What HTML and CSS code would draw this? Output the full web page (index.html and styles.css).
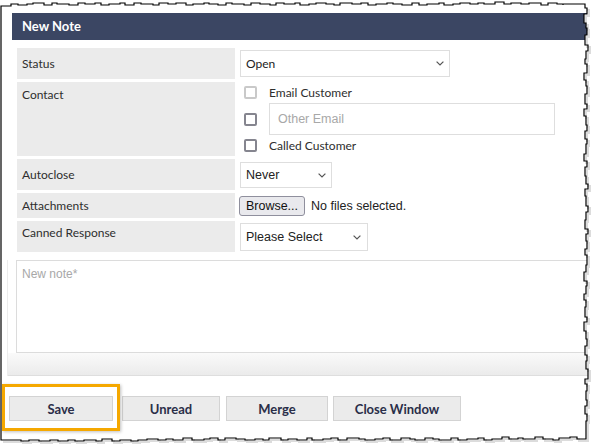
FILE: index.html
```html
<!DOCTYPE html>
<html>
<head>
<meta charset="utf-8">
<link rel="stylesheet" href="styles.css">
</head>
<body>
<div class="page">
  <div class="header">New Note</div>

  <div class="form">
    <div class="row r-status">
      <div class="label">Status</div>
      <div class="value">
        <div class="select sel-status"><span>Open</span>
          <svg class="chev" width="8" height="5" viewBox="0 0 8 5"><path d="M0.6 0.6 L4 4 L7.4 0.6" fill="none" stroke="#555" stroke-width="1.2"/></svg>
        </div>
      </div>
    </div>

    <div class="row r-contact">
      <div class="label top">Contact</div>
      <div class="value contact">
        <div class="cline l1"><span class="cb light"></span><span class="ctext">Email Customer</span></div>
        <div class="cline l2"><span class="cb"></span><input class="email" type="text" placeholder="Other Email"></div>
        <div class="cline l3"><span class="cb"></span><span class="ctext">Called Customer</span></div>
      </div>
    </div>

    <div class="row r-auto">
      <div class="label">Autoclose</div>
      <div class="value">
        <div class="select sel-auto"><span>Never</span>
          <svg class="chev" width="8" height="5" viewBox="0 0 8 5"><path d="M0.6 0.6 L4 4 L7.4 0.6" fill="none" stroke="#555" stroke-width="1.2"/></svg>
        </div>
      </div>
    </div>

    <div class="row r-attach">
      <div class="label">Attachments</div>
      <div class="value attach">
        <span class="browse">Browse...</span><span class="nofiles">No files selected.</span>
      </div>
    </div>

    <div class="row r-canned">
      <div class="label top canned">Canned Response</div>
      <div class="value">
        <div class="select sel-canned"><span>Please Select</span>
          <svg class="chev" width="8" height="5" viewBox="0 0 8 5"><path d="M0.6 0.6 L4 4 L7.4 0.6" fill="none" stroke="#555" stroke-width="1.2"/></svg>
        </div>
      </div>
    </div>
  </div>

  <div class="note-panel">
    <div class="note-wrap"><textarea class="note" placeholder="New note*"></textarea></div>
    <div class="panel-foot"></div>
  </div>

  <div class="actions">
    <button class="btn b-save">Save</button>
    <button class="btn b-unread">Unread</button>
    <button class="btn b-merge">Merge</button>
    <button class="btn b-close">Close Window</button>
  </div>

  <div class="highlight"></div>

  <svg class="torn" width="592" height="445" viewBox="0 0 592 445">
    <path class="mask" fill-rule="evenodd" d="M0,0H592V445H0Z M1,439 V6 h10 v-2 h7 v1 h9 v-1 h6 v-1 h11 v2 h8 v-2 h5 v1 h12 v1 h9 v-2 h7 v1 h10 v-1 h6 v2 h8 v-1 h11 v-1 h5 v2 h9 v-2 h7 v1 h12 v1 h6 v-2 h9 v1 h8 v-1 h10 v2 h7 v-1 h11 v-1 h5 v1 h9 v1 h8 v-2 h6 v1 h12 v1 h7 v-2 h9 v1 h10 v1 h6 v-2 h8 v1 h11 v-1 h5 v2 h9 v-1 h7 v-1 h10 v1 h8 v1 h6 v-2 h12 v1 h9 v-1 h7 v2 h8 v-1 h11 v-1 h6 v1 h9 v1 h10 v-2 h7 v2 h8 v-1 h12 v-1 h5 v2 h9 v-1 h7 v-1 h10 v1 h8 v-1 h6 v1 h11 v-2 h9 v2 h7 v-1 h10 v1 h8 v-1 h12 v2 h7 v-2 h9 v1 h6 v1 v-1 H585 V8 h2 v6 h-3 v9 h2 v5 h1 v7 h-2 v10 h3 v6 h-2 v8 h-1 v5 h2 v9 h-3 v7 h2 v6 h1 v8 h-2 v10 h2 v5 h-3 v7 h2 v9 h1 v6 h-2 v8 h2 v5 h-1 v10 h-2 v7 h3 v6 h-2 v9 h1 v8 h2 v5 h-3 v7 h1 v10 h2 v6 h-2 v8 h-1 v9 h3 v5 h-2 v7 h1 v8 h-2 v6 h2 v10 h-1 v7 h-2 v9 h3 v5 h-1 v8 h-2 v6 h2 v7 h-1 v10 h2 v5 h-3 v9 h2 v8 h1 v7 h-2 v9 h2 v6 h-1 v8 h2 v10 h-3 v5 h2 v7 h-1 v9 h1 v6 h-2 v8 h2 v7 h-1 V437 v2 h-9 v-2 h-7 v1 h-11 v2 h-6 v-1 h-10 v-2 h-8 v2 h-12 v-1 h-5 v1 h-9 v-2 h-7 v2 h-10 v1 h-8 v-2 h-6 v1 h-11 v1 h-9 v-2 h-7 v2 h-12 v-1 h-6 v-1 h-8 v2 h-10 v-1 h-5 v-1 h-9 v2 h-11 v-2 h-7 v1 h-8 v1 h-10 v-1 h-6 v-1 h-12 v2 h-9 v-2 h-7 v1 h-8 v1 h-11 v-2 h-5 v2 h-10 v-1 h-9 v1 h-7 v-2 h-12 v2 h-6 v-1 h-8 v1 h-10 v-1 h-9 v-1 h-11 v2 h-7 v-2 h-8 v1 h-6 v1 h-12 v-2 h-9 v2 h-10 v-1 h-7 v1 h-8 v-1 h-11 v1 h-9 v1 h-7 v-1 h-11 v1 h-8 v-2 h-10 v2 h-6 v-1 h-12 v1 h-9 v-1 h-7 v1 h-10 v-1 h-8 v1 h-11 v-1 h-10 v1 h-8 v-1 h-7 H1 Z"/>
    <path class="shadow" transform="translate(2,2)" d="M585,8 h2 v6 h-3 v9 h2 v5 h1 v7 h-2 v10 h3 v6 h-2 v8 h-1 v5 h2 v9 h-3 v7 h2 v6 h1 v8 h-2 v10 h2 v5 h-3 v7 h2 v9 h1 v6 h-2 v8 h2 v5 h-1 v10 h-2 v7 h3 v6 h-2 v9 h1 v8 h2 v5 h-3 v7 h1 v10 h2 v6 h-2 v8 h-1 v9 h3 v5 h-2 v7 h1 v8 h-2 v6 h2 v10 h-1 v7 h-2 v9 h3 v5 h-1 v8 h-2 v6 h2 v7 h-1 v10 h2 v5 h-3 v9 h2 v8 h1 v7 h-2 v9 h2 v6 h-1 v8 h2 v10 h-3 v5 h2 v7 h-1 v9 h1 v6 h-2 v8 h2 v7 h-1 V437 v2 h-9 v-2 h-7 v1 h-11 v2 h-6 v-1 h-10 v-2 h-8 v2 h-12 v-1 h-5 v1 h-9 v-2 h-7 v2 h-10 v1 h-8 v-2 h-6 v1 h-11 v1 h-9 v-2 h-7 v2 h-12 v-1 h-6 v-1 h-8 v2 h-10 v-1 h-5 v-1 h-9 v2 h-11 v-2 h-7 v1 h-8 v1 h-10 v-1 h-6 v-1 h-12 v2 h-9 v-2 h-7 v1 h-8 v1 h-11 v-2 h-5 v2 h-10 v-1 h-9 v1 h-7 v-2 h-12 v2 h-6 v-1 h-8 v1 h-10 v-1 h-9 v-1 h-11 v2 h-7 v-2 h-8 v1 h-6 v1 h-12 v-2 h-9 v2 h-10 v-1 h-7 v1 h-8 v-1 h-11 v1 h-9 v1 h-7 v-1 h-11 v1 h-8 v-2 h-10 v2 h-6 v-1 h-12 v1 h-9 v-1 h-7 v1 h-10 v-1 h-8 v1 h-11 v-1 h-10 v1 h-8 v-1 h-7 H1"/>
    <path class="edge" d="M1,439 V6 h10 v-2 h7 v1 h9 v-1 h6 v-1 h11 v2 h8 v-2 h5 v1 h12 v1 h9 v-2 h7 v1 h10 v-1 h6 v2 h8 v-1 h11 v-1 h5 v2 h9 v-2 h7 v1 h12 v1 h6 v-2 h9 v1 h8 v-1 h10 v2 h7 v-1 h11 v-1 h5 v1 h9 v1 h8 v-2 h6 v1 h12 v1 h7 v-2 h9 v1 h10 v1 h6 v-2 h8 v1 h11 v-1 h5 v2 h9 v-1 h7 v-1 h10 v1 h8 v1 h6 v-2 h12 v1 h9 v-1 h7 v2 h8 v-1 h11 v-1 h6 v1 h9 v1 h10 v-2 h7 v2 h8 v-1 h12 v-1 h5 v2 h9 v-1 h7 v-1 h10 v1 h8 v-1 h6 v1 h11 v-2 h9 v2 h7 v-1 h10 v1 h8 v-1 h12 v2 h7 v-2 h9 v1 h6 v1 v-1 H585 V8 h2 v6 h-3 v9 h2 v5 h1 v7 h-2 v10 h3 v6 h-2 v8 h-1 v5 h2 v9 h-3 v7 h2 v6 h1 v8 h-2 v10 h2 v5 h-3 v7 h2 v9 h1 v6 h-2 v8 h2 v5 h-1 v10 h-2 v7 h3 v6 h-2 v9 h1 v8 h2 v5 h-3 v7 h1 v10 h2 v6 h-2 v8 h-1 v9 h3 v5 h-2 v7 h1 v8 h-2 v6 h2 v10 h-1 v7 h-2 v9 h3 v5 h-1 v8 h-2 v6 h2 v7 h-1 v10 h2 v5 h-3 v9 h2 v8 h1 v7 h-2 v9 h2 v6 h-1 v8 h2 v10 h-3 v5 h2 v7 h-1 v9 h1 v6 h-2 v8 h2 v7 h-1 V437 v2 h-9 v-2 h-7 v1 h-11 v2 h-6 v-1 h-10 v-2 h-8 v2 h-12 v-1 h-5 v1 h-9 v-2 h-7 v2 h-10 v1 h-8 v-2 h-6 v1 h-11 v1 h-9 v-2 h-7 v2 h-12 v-1 h-6 v-1 h-8 v2 h-10 v-1 h-5 v-1 h-9 v2 h-11 v-2 h-7 v1 h-8 v1 h-10 v-1 h-6 v-1 h-12 v2 h-9 v-2 h-7 v1 h-8 v1 h-11 v-2 h-5 v2 h-10 v-1 h-9 v1 h-7 v-2 h-12 v2 h-6 v-1 h-8 v1 h-10 v-1 h-9 v-1 h-11 v2 h-7 v-2 h-8 v1 h-6 v1 h-12 v-2 h-9 v2 h-10 v-1 h-7 v1 h-8 v-1 h-11 v1 h-9 v1 h-7 v-1 h-11 v1 h-8 v-2 h-10 v2 h-6 v-1 h-12 v1 h-9 v-1 h-7 v1 h-10 v-1 h-8 v1 h-11 v-1 h-10 v1 h-8 v-1 h-7 H1 Z"/>
  </svg>
</div>
</body>
</html>
```

FILE: styles.css
```css
* { box-sizing: border-box; }

html, body {
  margin: 0;
  padding: 0;
  background: #ffffff;
}

body {
  font-family: Lato, "Liberation Sans", Arial, sans-serif;
  color: #333333;
}

.page {
  position: relative;
  width: 592px;
  height: 445px;
  overflow: hidden;
  padding-top: 13px;
}

.header {
  margin-left: 12px;
  height: 27px;
  background: #3b4663;
  color: #ffffff;
  font-weight: 700;
  font-size: 13px;
  line-height: 27px;
  padding-left: 10px;
}

.form {
  margin: 8px 0 0 17px;
  display: flex;
  flex-direction: column;
  gap: 3px;
}

.row {
  display: grid;
  grid-template-columns: 218px 1fr;
  column-gap: 5px;
}

.r-status { height: 31px; }
.r-contact { height: 74px; }
.r-auto { height: 31px; }
.r-attach { height: 25px; }
.r-canned { height: 31px; }

.label {
  background: #ebebeb;
  font-size: 12px;
  line-height: 16px;
  padding-left: 5px;
  display: flex;
  align-items: center;
  color: #2e2e2e;
}

.label.top {
  align-items: flex-start;
  padding-top: 5px;
}

.label.canned { padding-top: 4px; }

.value {
  display: flex;
  align-items: flex-start;
}

.select {
  display: flex;
  align-items: center;
  justify-content: space-between;
  border: 1px solid #dedede;
  background: #ffffff;
  font-family: "Liberation Sans", Arial, sans-serif;
  font-size: 12.5px;
  color: #222222;
  padding: 0 5px 0 5px;
}

.sel-status {
  margin-top: 2px;
  width: 210px;
  height: 27px;
  font-family: Lato, "Liberation Sans", sans-serif;
  font-size: 12px;
}

.sel-auto {
  margin-top: 3px;
  width: 92px;
  height: 26px;
}

.sel-canned {
  margin-top: 2px;
  width: 128px;
  height: 28px;
  padding-right: 6px;
}

.chev { display: block; }

.contact {
  flex-direction: column;
  padding-top: 4px;
}

.cline {
  display: flex;
  align-items: center;
}

.l1 { height: 13px; }
.l2 { margin-top: 4px; height: 32px; }
.l3 { margin-top: 4px; height: 13px; }

.cb {
  width: 13px;
  height: 13px;
  margin-left: 4px;
  border: 2px solid #85858f;
  border-radius: 2px;
  background: #ffffff;
  flex: none;
}

.cb.light { border-color: #c9c9c9; }

.ctext {
  margin-left: 12px;
  font-size: 12px;
  line-height: 14px;
  padding-top: 1px;
  color: #2e2e2e;
}

.email {
  margin-left: 12px;
  width: 286px;
  height: 32px;
  border: 1px solid #dedede;
  padding: 0 8px;
  font-family: "Liberation Sans", Arial, sans-serif;
  font-size: 12.5px;
  outline: none;
}

.email::placeholder { color: #a8a8a8; }

.attach {
  align-items: center;
}

.browse {
  margin-left: -1px;
  width: 66px;
  height: 20px;
  border: 1px solid #8f8f9d;
  border-radius: 3px;
  background: #e9e9ed;
  font-family: "Liberation Sans", Arial, sans-serif;
  font-size: 12.5px;
  line-height: 18px;
  text-align: center;
  color: #111111;
}

.nofiles {
  margin-left: 6px;
  font-family: "Liberation Sans", Arial, sans-serif;
  font-size: 12.5px;
  color: #222222;
}

.note-panel {
  margin: 8px 0 0 7px;
  border-left: 1px solid #ececec;
}

.note-wrap {
  padding-left: 8px;
}

.note {
  display: block;
  width: 600px;
  height: 93px;
  border: 1px solid #dcdcdc;
  padding: 6px 5px;
  resize: none;
  font-family: "Liberation Sans", Arial, sans-serif;
  font-size: 12px;
  outline: none;
  margin: 0;
}

.note::placeholder { color: #a8a8a8; }

.panel-foot {
  height: 23px;
  background: linear-gradient(to bottom, #fafafa, #ebebeb);
  border-bottom: 1px solid #dedede;
}

.actions {
  margin: 20px 0 0 9px;
  display: flex;
}

.btn {
  height: 25px;
  background: #ebebeb;
  border: 1px solid #d3d3d3;
  border-radius: 0;
  font-family: Lato, "Liberation Sans", sans-serif;
  font-weight: 700;
  font-size: 13px;
  color: #2a2e48;
  padding: 0;
  margin: 0;
}

.b-save { width: 104px; }
.b-unread { width: 98px; margin-left: 9px; }
.b-merge { width: 102px; margin-left: 6px; }
.b-close { width: 128px; margin-left: 5px; }

.highlight {
  position: absolute;
  left: 2px;
  top: 384px;
  width: 118px;
  height: 47px;
  border: 3px solid #f5a800;
  box-shadow: 1px 1px 3px rgba(0, 0, 0, 0.25);
}

.torn {
  position: absolute;
  left: 0;
  top: 0;
  pointer-events: none;
}

.torn .mask { fill: #ffffff; }

.torn .shadow {
  fill: none;
  stroke: #9a9a9a;
  stroke-opacity: 0.35;
  stroke-width: 2;
}

.torn .edge {
  fill: none;
  stroke: #000000;
  stroke-width: 1.2;
}
```
